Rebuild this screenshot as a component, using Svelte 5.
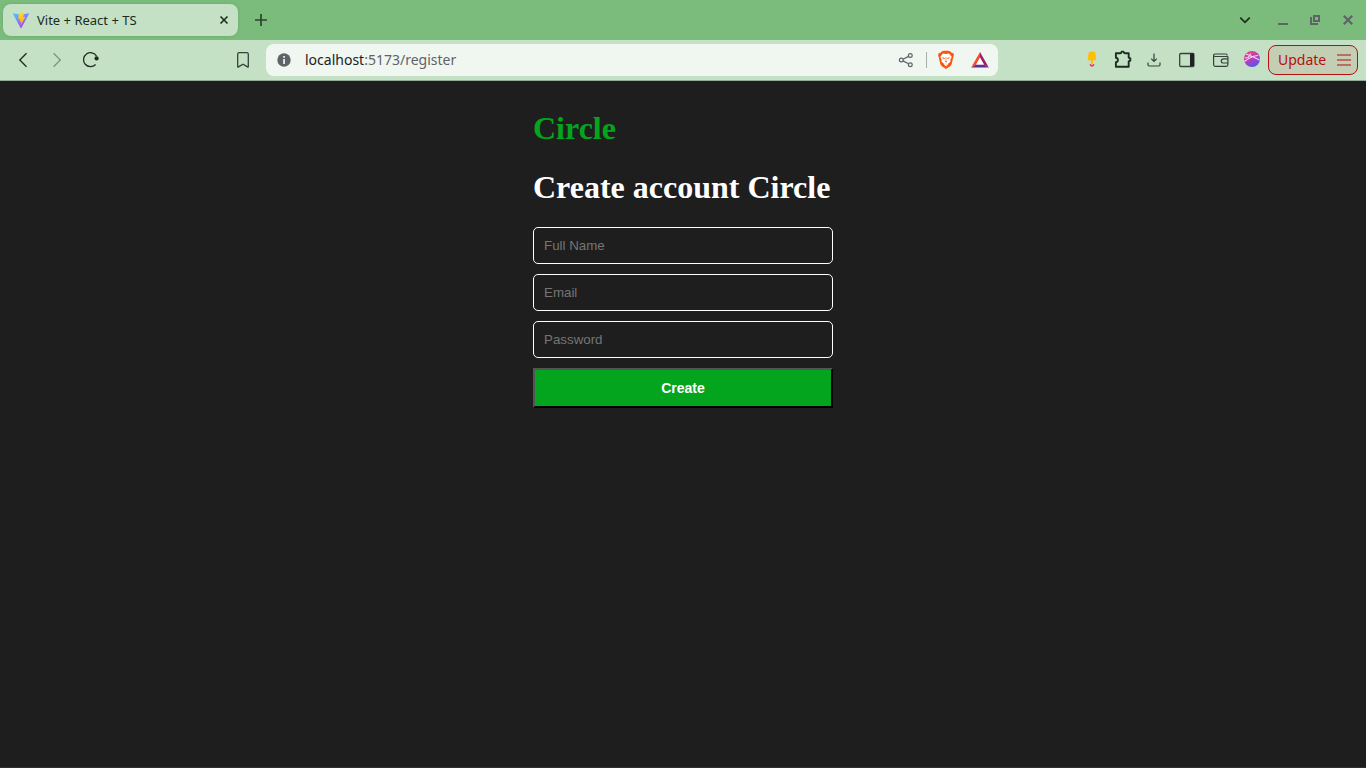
<script lang="ts">
  let fullName = $state('');
  let email = $state('');
  let password = $state('');
</script>

<div class="browser">
  <header>
    <div class="tabs">
      <div class="tab">
        <svg width="18" height="18" viewBox="0 0 18 18" aria-hidden="true">
          <defs>
            <linearGradient id="vite" x1="0" y1="0" x2=".6" y2="1">
              <stop offset="0" stop-color="#41d1ff" /><stop offset="1" stop-color="#bd34fe" />
            </linearGradient>
            <linearGradient id="bolt" x1="0" y1="0" x2="0" y2="1">
              <stop offset="0" stop-color="#ffdd35" /><stop offset="1" stop-color="#ffa800" />
            </linearGradient>
          </defs>
          <path d="M1.3 2.3 9 3.7l7.7-1.4q.6 0 .3.7L9.4 16.9q-.4.5-.8 0L1 3q-.3-.7.3-.7Z" fill="url(#vite)" />
          <path d="m12.2.9-5.4 1.1-.5 6.4 2-.4-.5 2.9 1.5-.4-.8 4.1 5-8.8-2.3.4Z" fill="url(#bolt)" />
        </svg>
        <span class="title">Vite + React + TS</span>
        <button class="close" aria-label="Close tab">
          <svg width="12" height="12" viewBox="0 0 12 12"><path d="m2.5 2.5 7 7m0-7-7 7" fill="none" stroke="#1d2b20" stroke-width="1.6" /></svg>
        </button>
      </div>
      <button class="cell" aria-label="New tab">
        <svg viewBox="0 0 32 32"><path d="M9 16h12M15 10v12" fill="none" stroke="#2c4430" stroke-width="1.7" /></svg>
      </button>
      <div class="window">
        <button class="cell" aria-label="Search tabs">
          <svg viewBox="0 0 32 32"><path d="m4.3 13.6 4.7 4.7 4.7-4.7" fill="none" stroke="#1d2b20" stroke-width="1.7" /></svg>
        </button>
        <button class="cell" aria-label="Minimize">
          <svg viewBox="0 0 32 32"><path d="M10 19h10v2H10z" fill="#5f6368" /></svg>
        </button>
        <button class="cell" aria-label="Restore">
          <svg viewBox="0 0 32 32"><path d="M11 13v7h7M14 12h5v5h-5z" fill="none" stroke="#5f6368" stroke-width="2" /></svg>
        </button>
        <button class="cell" aria-label="Close">
          <svg viewBox="0 0 32 32"><path d="m11.8 11.8 8.4 8.4m0-8.4-8.4 8.4" fill="none" stroke="#5f6368" stroke-width="2.2" /></svg>
        </button>
      </div>
    </div>

    <div class="toolbar">
      <nav>
        <button class="cell" aria-label="Back">
          <svg viewBox="0 0 32 32"><path d="m19.5 9.2-6.7 6.8 6.7 6.8" fill="none" stroke="#1d2b20" stroke-width="1.3" /></svg>
        </button>
        <button class="cell" aria-label="Forward">
          <svg viewBox="0 0 32 32"><path d="m12.6 9.2 6.7 6.8-6.7 6.8" fill="none" stroke="#7c9580" stroke-width="1.3" /></svg>
        </button>
        <button class="cell" aria-label="Reload">
          <svg viewBox="0 0 32 32"><path d="M21.6 12.2A7 7 0 1 0 20.6 20.5" fill="none" stroke="#1d2b20" stroke-width="1.3" /><circle cx="21.6" cy="14.4" r="2.1" fill="#1d2b20" /></svg>
        </button>
        <button class="cell bookmark" aria-label="Bookmark this page">
          <svg viewBox="0 0 32 32"><path d="M10.7 22.5V10.2q0-1.5 1.5-1.5h7.6q1.5 0 1.5 1.5v12.3q0 1-.8.4L16 20.2l-4.5 2.7q-.8.6-.8-.4Z" fill="none" stroke="#344239" stroke-width="1.3" /></svg>
        </button>
      </nav>

      <div class="address">
        <button class="cell" aria-label="Site information">
          <svg viewBox="0 0 32 32"><circle cx="16" cy="16" r="6.7" fill="#5f6368" /><path d="M15.2 12h1.7v1.7h-1.7zM15.2 15h1.7v5h-1.7z" fill="#f0f7f0" /></svg>
        </button>
        <span class="url"><b>localhost</b>:5173/register</span>
        <button class="cell" aria-label="Share">
          <svg viewBox="0 0 32 32" fill="none" stroke="#5f6368" stroke-width="1.2"><circle cx="11.3" cy="16" r="1.9" /><circle cx="20.3" cy="11.5" r="1.9" /><circle cx="20.3" cy="20.7" r="1.9" /><path d="m13 15.2 5.6-2.8M13 16.9l5.6 2.9" /></svg>
        </button>
        <i class="divider"></i>
        <button class="cell" aria-label="Shields">
          <svg viewBox="0 0 32 32">
            <path d="m12 7.2 2-.5h4l2 .5 1.6 1.6 1.8.5.5 2.3-.5 1.2-1.7 7.2-1.2 2-4.5 3-4.5-3-1.2-2-1.7-7.2-.5-1.2.5-2.3 1.8-.5Z" fill="#fb5410" />
            <path d="m13 9.5 3 .6 3-.6 2.7 3.2-1.4 3.3.2 1.8-2.2 1.6-.8 1.6-1.5 1.2-1.5-1.2-.8-1.6-2.2-1.6.2-1.8-1.4-3.3Z" fill="#fff" />
            <path d="m12.2 13.2 2.5.7v1.1l-2-.5Zm7.6 0-2.5.7v1.1l2-.5ZM15.7 13h.6v4l.9.6-1.2.8-1.2-.8.9-.6Zm-1.2 6.4 1.5.5 1.5-.5-1.5 1.2Z" fill="#fb5410" />
          </svg>
        </button>
        <button class="cell rewards" aria-label="Rewards">
          <svg viewBox="0 0 32 32"><path d="M16 8 7.2 23.5l5-3L16 13.7Z" fill="#ff4724" /><path d="m16 8 8.8 15.5-5-3L16 13.7Z" fill="#9e1f63" /><path d="M7.2 23.5h17.6l-5-3h-7.6Z" fill="#662d91" /><path d="m16 13.5 3.9 7h-7.8Z" fill="#fff" /></svg>
        </button>
      </div>

      <div class="tools">
        <button class="cell" aria-label="Lamp extension">
          <svg viewBox="0 0 32 32"><path d="M13 8q3-1 6 0 1 3 1 7 0 1.5-2 1.5h-1v3.5h-2v-3.5h-1.3q-2 0-2-1.5 0-4 1.3-7Z" fill="#ffbe0b" /><path d="M13.8 20h4.4v1.5L16 23l-2.2-1.5Z" fill="#d64076" /><path d="M15 19.5h2V21h-2z" fill="#f4a7a0" /></svg>
        </button>
        <button class="cell" aria-label="Extensions">
          <svg viewBox="0 0 32 32"><path d="M7.9 9.3h3.9l1.2-.3.7-1.4h1.8l.8 1.4 1.2.3h3.2v4.3l1.6.8v2.2l-1.6.8v5.3H7.9v-4.5q2-.2 2-2.2t-2-2.2Z" fill="none" stroke="#1d2b20" stroke-width="1.9" stroke-linejoin="round" /></svg>
        </button>
        <button class="cell" aria-label="Downloads">
          <svg viewBox="0 0 32 32"><path d="M14 9.5v8m-2.8-2.8 2.8 2.8 2.8-2.8M8 18.5v2.3q0 1.2 1.2 1.2h9.6q1.2 0 1.2-1.2v-2.3" fill="none" stroke="#344239" stroke-width="1.2" /></svg>
        </button>
        <button class="cell" aria-label="Sidebar">
          <svg viewBox="0 0 32 32"><rect x="7.7" y="9.5" width="14.2" height="13" rx="1" fill="none" stroke="#344239" stroke-width="1.3" /><path d="M18 9.5h4v12.5h-4z" fill="#202124" /></svg>
        </button>
        <button class="cell" aria-label="Wallet">
          <svg viewBox="0 0 32 32" fill="none" stroke="#344239" stroke-width="1.2"><path d="M24 12.5H11q-1.4 0-1.4-1.2T11 10h10.8q1.4 0 1.4 1.5M9.6 11.5v9q0 1.8 1.7 1.8h11q1.6 0 1.6-1.8v-8" /><path d="M24 14.8h-4.5q-2.2 0-2.2 2.1t2.2 2.1H24" /></svg>
        </button>
        <button class="cell" aria-label="Profile">
          <svg viewBox="0 0 32 32">
            <defs><linearGradient id="ball" x1=".2" y1="0" x2=".7" y2="1"><stop offset="0" stop-color="#f0446f" /><stop offset=".5" stop-color="#b83cc4" /><stop offset="1" stop-color="#4b5ce8" /></linearGradient></defs>
            <circle cx="16" cy="15" r="8" fill="url(#ball)" />
            <path d="M8.5 17.5Q15 12 22.2 11.5M10 10q6 2 13.5 6M9 14l3-.5 3-4" fill="none" stroke="#f6d9f3" stroke-width="1.1" />
          </svg>
        </button>
        <button class="update">Update
          <svg width="14" height="14" viewBox="0 0 14 14"><path d="M0 2h14M0 7h14M0 12h14" stroke="#b3100e" stroke-width="1.1" /></svg>
        </button>
      </div>
    </div>
  </header>

  <main>
    <form onsubmit={(event) => event.preventDefault()}>
      <h1 class="brand">Circle</h1>
      <h1>Create account Circle</h1>
      <input type="text" aria-label="Full Name" placeholder="Full Name" bind:value={fullName} />
      <input type="email" aria-label="Email" placeholder="Email" bind:value={email} />
      <input type="password" aria-label="Password" placeholder="Password" bind:value={password} />
      <button class="create" type="submit">Create</button>
    </form>
  </main>
</div>

<style>
  :global(body) { margin: 0; background: #1e1e1e; }
  .browser { display: flex; flex-direction: column; min-height: 100vh; }
  header { font-family: "Noto Sans", "Open Sans", sans-serif; }
  header button { padding: 0; border: 0; background: none; }
  .cell { display: block; flex: none; width: 32px; height: 32px; }
  svg { display: block; }
  .cell svg { width: 32px; height: 32px; }
  .tabs { display: flex; align-items: center; gap: 8px; height: 40px; padding: 0 2px 0 3px; box-sizing: border-box; background: #7bbb7c; }
  .tab { display: flex; align-items: center; gap: 7px; width: 235px; height: 32px; padding: 0 8px 0 9px; box-sizing: border-box; border-radius: 8px; background: #c5e1c5; box-shadow: 0 0 3px #68a86b; }
  .title { flex: 1; font-size: 13px; line-height: 18px; color: #1d2b20; white-space: nowrap; }
  .window { display: flex; margin-left: auto; }
  .toolbar { display: flex; align-items: center; height: 41px; padding-right: 8px; box-sizing: border-box; border-bottom: 1px solid #94ab95; background: #c5e1c5; }
  nav { display: flex; gap: 2px; width: 259px; padding: 0 0 0 7px; box-sizing: border-box; }
  .bookmark { margin-left: auto; }
  .address { display: flex; flex: 1; align-items: center; min-width: 0; height: 32px; margin-left: 7px; padding: 0 2px; border-radius: 8px; background: #f0f7f0; }
  .url { flex: 1; min-width: 0; padding-left: 5px; overflow: hidden; font-size: 14px; line-height: 18px; color: #5f6368; white-space: nowrap; }
  .url b { font-weight: 400; color: #202124; }
  .divider { width: 1px; height: 16px; margin: 0 3px 0 4px; background: #a9b0aa; }
  .rewards { margin-left: 2px; }
  .tools { display: flex; align-items: center; margin-left: 78px; }
  header .update { display: flex; align-items: center; justify-content: space-between; width: 90px; height: 30px; padding: 0 6px 0 9px; box-sizing: border-box; border: 1px solid #b3100e; border-radius: 8px; background: #c4ceb5; font: 14px/18px "Noto Sans", "Open Sans", sans-serif; color: #b3100e; }
  main { display: flex; flex: 1; justify-content: center; padding: 29px 16px; border-bottom: 1px solid #303030; background: #1e1e1e; }
  form { display: flex; flex-direction: column; gap: 10px; width: 300px; }
  h1 { margin: 0 0 11px; font: bold 32px/37px "Liberation Serif", serif; color: #fff; white-space: nowrap; }
  h1.brand { margin-bottom: 12px; color: #04a51e; }
  form input { width: 100%; height: 37px; padding: 10px; box-sizing: border-box; border: 1px solid #fff; border-radius: 5px; background: transparent; font-family: "Liberation Sans", sans-serif; color: #fff; }
  form input::placeholder { color: #757575; }
  .create { height: 40px; padding: 10px; border: 2px outset #000; border-radius: 0; background: #04a51e; font: bold 14px/16px "Liberation Sans", sans-serif; color: #fff; }
</style>
